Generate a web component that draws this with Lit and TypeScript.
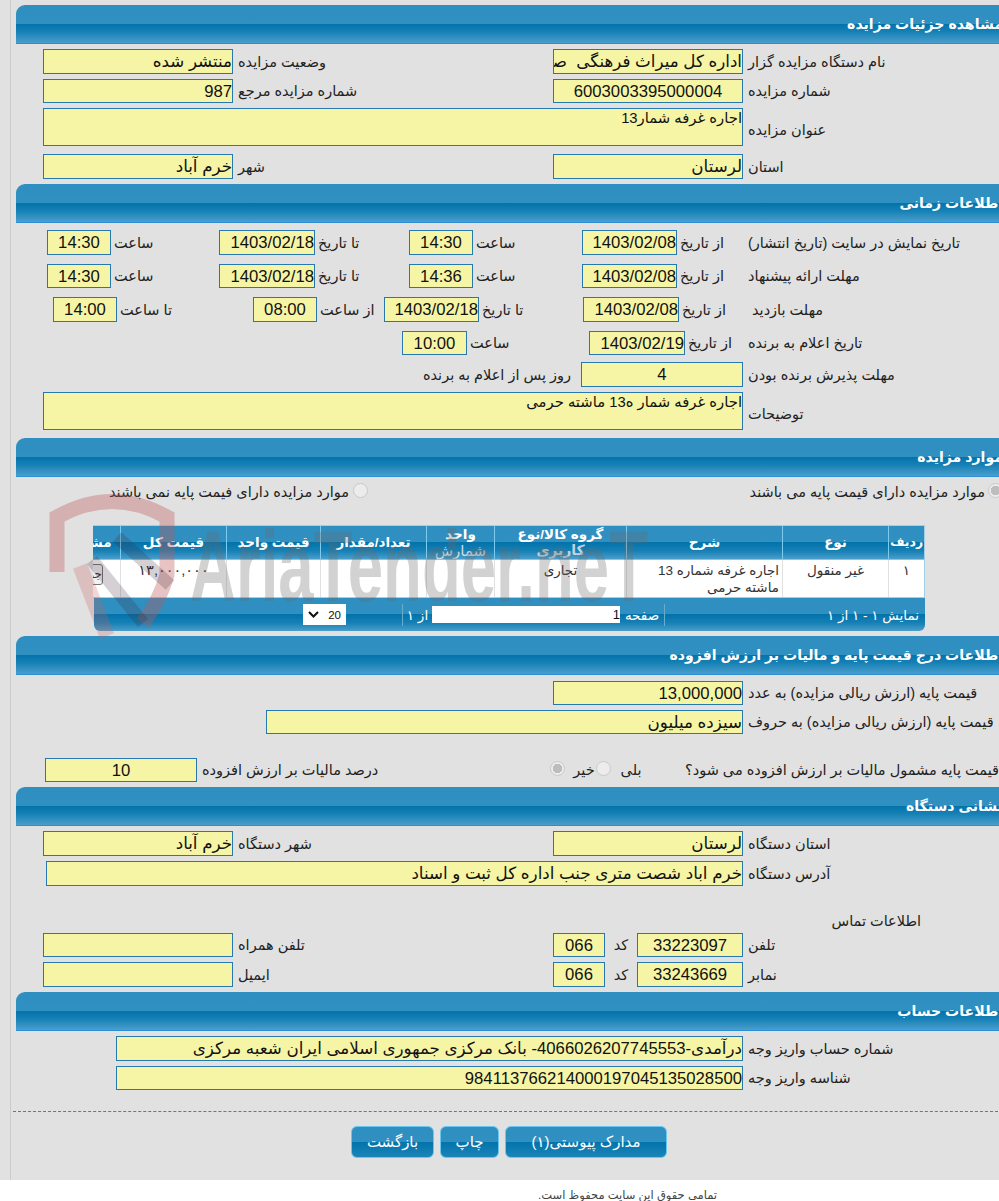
import { LitElement, html, css } from "lit";
import { customElement } from "lit/decorators.js";

const headCols = [
  html`ردیف`,
  html`نوع`,
  html`شرح`,
  html`گروه کالا/نوع <span class="dim heavy">کاربری</span>`,
  html`واحد <span class="dim">شمارش</span>`,
  html`تعداد/مقدار`,
  html`قیمت واحد`,
  html`قیمت کل`,
  html`<span class="nowrap">مشاهده</span>`,
];

@customElement("app-root")
export class AppRoot extends LitElement {
  static styles = css`
    :host { display: block; width: 999px; height: 1201px; overflow: hidden; background: #fff;
      font-family: "Liberation Sans", "DejaVu Sans", sans-serif; font-size: 14.5px; color: #222; }
    .page { height: 1180px; background: #e1e1e1; padding-left: 10px; box-sizing: border-box; }
    .main { position: relative; height: 1180px; width: 1000px; box-sizing: border-box; border-left: 1px solid #cbcbcb; padding: 5px 0 0 5px; }
    .sec { width: 987px; }
    .m5 { margin-top: 5px; }
    .m8 { margin-top: 8px; }
    .bar { box-sizing: border-box; height: 39px; direction: rtl; color: #fff; font-weight: bold; font-size: 14.1px; line-height: 38px; white-space: nowrap;
      border-top-left-radius: 9px; border-bottom: 1px solid #2a8fd6;
      background: linear-gradient(#2e8fc0 0, #3090c0 49%, #0373ab 50%, #1580b5 70%, #4a9ecb 100%); }
    .body { direction: rtl; padding-right: 4px; display: flex; flex-direction: column; }

    .row { display: grid; direction: rtl; align-items: stretch; height: 25px; margin-top: 5px; }
    .h24 { height: 24px; }
    .h38 { height: 38px; }
    .two { grid-template-columns: 256px 190px 320px 190px; }
    .wide { grid-template-columns: 256px 700px; }
    .addr { grid-template-columns: 256px 697px; }
    .basew { grid-template-columns: 256px 477px; }
    .bank { grid-template-columns: 256px 627px; }
    .ta { grid-template-columns: 256px 66px 95px 109px 64px 94px 96px 108px 64px; }
    .tb { grid-template-columns: 256px 64px 96px 104px 95px 67px 64px 136px 64px; }
    .tc { grid-template-columns: 256px 58px 96px 122px 65px; }
    .td { grid-template-columns: 256px 162px 1fr; }
    .phone { grid-template-columns: 256px 106px 32px 52px 320px 190px; }
    .tax { grid-template-columns: 314px 42px 24px 8px 15px 24px 22px 353px 152px; }

    .l { display: flex; align-items: center; justify-content: flex-end; padding-left: 5px; white-space: nowrap; min-width: 0; }
    .l0 { padding-left: 0; }
    .l3 { padding-left: 3px; }
    .l9 { padding-left: 9px; }
    .lr { justify-content: flex-start; padding-right: 10px; padding-left: 0; }
    .c { justify-content: center; padding: 0; }
    .low { padding-top: 5px; }
    .f { box-sizing: border-box; border: 1px solid #2778b0; background: #f6f5a5; overflow: hidden; white-space: pre; font-size: 16.7px; line-height: 23px; color: #111; text-align: right; }
    .mid { text-align: center; }
    .area { font-size: 14.8px; line-height: 18px; white-space: normal; }
    .g1 { margin-top: 1px; }
    .g6 { margin-top: 6px; }
    .g7 { margin-top: 7px; }
    .g8 { margin-top: 8px; }
    .g9 { margin-top: 9px; }
    .g24 { margin-top: 24px; }

    .radios { display: flex; direction: rtl; height: 24px; margin: 3px -4px 0 0; align-items: center; }
    .rt { white-space: nowrap; }
    .rt1 { width: 635px; display: flex; gap: 3px; align-items: center; flex: none; }
    .rt2 { display: flex; gap: 4px; align-items: center; flex: none; }
    .radio { width: 15px; height: 15px; box-sizing: border-box; border-radius: 50%; border: 1px solid #c9c9c9; background: #ececec; display: block; flex: none; position: relative; top: -2px; }
    .on { background: radial-gradient(circle, #bdbdbd 0 4.5px, #ececec 5px); }
    .taxr { display: flex; align-items: center; justify-content: flex-end; }

    .tablewrap { width: 832px; margin: 21px 74px 0 0; border: 1px solid #a0cfe6; border-left: 0; box-sizing: border-box; overflow: hidden; background: #fff; height: 73px; }
    .tgrid { display: grid; grid-template-columns: 36px 106px 156px 132px 68px 106px 94px 106px 70px; direction: rtl; width: 874px; }
    .th { box-sizing: border-box; height: 34px; border-left: 1px solid #7ccbef; border-bottom: 1px solid #7ccbef; color: #fff; font-weight: bold; font-size: 13.5px; line-height: 15.5px; display: flex; flex-direction: column; align-items: center; justify-content: center; text-align: center; overflow: hidden;
      background: linear-gradient(#2e8fc0 0, #3090c0 49%, #0373ab 50%, #1580b5 75%, #4a9ecb 100%); }
    .th:first-child { font-size: 12.5px; }
    .th .dim { display: block; color: #d0dde5; font-weight: normal; font-size: 15px; }
    .th .heavy { font-weight: bold; font-size: 14px; color: #c3d3dc; }
    .nowrap { white-space: nowrap; }
    .td1 { box-sizing: border-box; height: 37px; border-left: 1px solid #e0e0e0; background: #fff; font-size: 13.5px; line-height: 17px; text-align: center; padding: 2px 3px; color: #333; overflow: hidden; }
    .tr { text-align: right; padding-right: 3px; }
    .big { font-size: 14.5px; }
    .mini { direction: rtl; display: block; width: 60px; height: 21px; box-sizing: border-box; margin: 4px 17px 0 0; border: 1px solid #777; border-radius: 3px; background: #f2f2f2; font-size: 12px; line-height: 19px; text-align: right; white-space: nowrap; overflow: hidden; flex: none; }
    .mini-wrap { display: flex; justify-content: flex-start; padding: 0; }
    .pager { width: 831px; margin: 0 74px 0 0; height: 33px; box-sizing: border-box; border-radius: 0 0 6px 6px; direction: rtl; display: flex; align-items: center; color: #fff; font-size: 13.5px;
      background: linear-gradient(#2e8fc0 0, #3090c0 49%, #0373ab 50%, #1580b5 75%, #4a9ecb 100%); }
    .info { width: 203px; padding-right: 6px; box-sizing: border-box; white-space: nowrap; flex: none; }
    .ico { display: flex; justify-content: center; opacity: .45; flex: none; }
    .i30 { width: 30px; }
    .i22 { width: 22px; }
    .i28 { width: 28px; }
    .sep { width: 1px; height: 22px; background: #6aaccf; flex: none; }
    .s1 { margin: 0 5px 0 0; }
    .s2 { margin: 0 0 0 2px; }
    .word { white-space: nowrap; flex: none; text-align: center; }
    .w44 { width: 44px; }
    .w29 { width: 29px; }
    .pinput { width: 188px; height: 17px; background: #fff; color: #111; flex: none; font-size: 13px; line-height: 17px; text-align: right; }
    .sel { width: 43px; height: 21px; background: #fff; color: #111; flex: none; display: flex; align-items: center; justify-content: space-between; padding: 0 5px; box-sizing: border-box; font-size: 11.5px; margin-right: 4px; }

    .note { height: 23px; margin-top: 23px; padding-right: 78px; display: flex; align-items: center; }
    .dash { border-top: 1px dashed #3d86ad; margin: 21px 0 0 -3px; width: 990px; }
    .btns { display: flex; direction: rtl; gap: 6px; margin-top: 14px; padding-right: 336px; }
    .btn { box-sizing: border-box; height: 32px; border: 1px solid #69c6ee; border-radius: 6px; color: #fff; font-size: 15px; display: flex; align-items: center; justify-content: center;
      background: linear-gradient(#2e8fc0 0, #3090c0 49%, #0373ab 50%, #1a85b8 100%); }
    .b1 { width: 162px; } .b2 { width: 59px; } .b3 { width: 83px; }
    .foot { direction: rtl; height: 21px; padding-right: 282px; padding-top: 8px; box-sizing: border-box; font-size: 11.5px; letter-spacing: .3px; color: #444; white-space: nowrap; }

    .mark { position: absolute; left: -11px; top: 490px; width: 999px; height: 160px; pointer-events: none; }
    .mark-text { font-family: "Liberation Sans", sans-serif; font-weight: bold; font-size: 100px; fill: rgba(105,105,105,.3); }
    .rim { fill: none; stroke: rgba(190,90,90,.36); stroke-width: 15; }
    .chk { fill: none; stroke: rgba(205,90,90,.25); stroke-width: 15; }
    .chk2 { fill: none; stroke: rgba(60,40,60,.22); stroke-width: 13; }
  `;

  private tri(flip: boolean) {
    return html`<svg width="16" height="8" viewBox="0 0 16 8">
      ${flip
        ? html`<path fill="#fff" d="M8 0 1 4l7 4zM15 0 8 4l7 4z" />`
        : html`<path fill="#fff" d="M1 0l7 4-7 4zM8 0l7 4-7 4z" />`}
    </svg>`;
  }
  private edge(flip: boolean) {
    return html`<svg width="12" height="8" viewBox="0 0 12 8">
      ${flip
        ? html`<path fill="#fff" d="M0 0h2v8H0zM10 0 3 4l7 4z" />`
        : html`<path fill="#fff" d="M10 0h2v8h-2zM2 0l7 4-7 4z" />`}
    </svg>`;
  }

  render() {
    return html`<div class="page"><div class="main">
      <div class="sec">
        <div class="bar">مشاهده جزئیات مزایده</div>
        <div class="body">
          <div class="row two">
            <div class="l">نام دستگاه مزایده گزار</div>
            <div class="f">اداره کل میراث فرهنگی  صنایع دستی و گردشگری استان لرستان</div>
            <div class="l">وضعیت مزایده</div>
            <div class="f">منتشر شده</div>
          </div>
          <div class="row two h24">
            <div class="l">شماره مزایده</div><div class="f mid">6003003395000004</div>
            <div class="l">شماره مزایده مرجع</div><div class="f">987</div>
          </div>
          <div class="row wide h38">
            <div class="l low">عنوان مزایده</div><div class="f area">اجاره غرفه شمار13</div>
          </div>
          <div class="row two g8">
            <div class="l">استان</div><div class="f">لرستان</div>
            <div class="l">شهر</div><div class="f">خرم آباد</div>
          </div>
        </div>
      </div>

      <div class="sec m5">
        <div class="bar">اطلاعات زمانی</div>
        <div class="body">
          <div class="row ta g7">
            <div class="l">تاریخ نمایش در سایت (تاریخ انتشار)</div><div class="l l3">از تاریخ</div><div class="f">1403/02/08</div>
            <div class="l l3">ساعت</div><div class="f mid">14:30</div>
            <div class="l l3">تا تاریخ</div><div class="f">1403/02/18</div>
            <div class="l l3">ساعت</div><div class="f mid">14:30</div>
          </div>
          <div class="row ta h24 g9">
            <div class="l">مهلت ارائه پیشنهاد</div><div class="l l3">از تاریخ</div><div class="f">1403/02/08</div>
            <div class="l l3">ساعت</div><div class="f mid">14:36</div>
            <div class="l l3">تا تاریخ</div><div class="f">1403/02/18</div>
            <div class="l l3">ساعت</div><div class="f mid">14:30</div>
          </div>
          <div class="row tb g9">
            <div class="l l9">مهلت بازدید</div><div class="l l3">از تاریخ</div><div class="f">1403/02/08</div>
            <div class="l l3">تا تاریخ</div><div class="f">1403/02/18</div>
            <div class="l l3">از ساعت</div><div class="f mid">08:00</div>
            <div class="l l3">تا ساعت</div><div class="f mid">14:00</div>
          </div>
          <div class="row tc h24 g9">
            <div class="l">تاریخ اعلام به برنده</div><div class="l l3">از تاریخ</div><div class="f">1403/02/19</div>
            <div class="l l3">ساعت</div><div class="f mid">10:00</div>
          </div>
          <div class="row td g7">
            <div class="l">مهلت پذیرش برنده بودن</div><div class="f mid">4</div><div class="l lr">روز پس از اعلام به برنده</div>
          </div>
          <div class="row wide h38">
            <div class="l low">توضیحات</div><div class="f area">اجاره غرفه شمار ه13 ماشته حرمی</div>
          </div>
        </div>
      </div>

      <div class="sec m8">
        <div class="bar">موارد مزایده</div>
        <div class="body">
          <div class="radios">
            <div class="rt1"><span class="radio on"></span><span class="rt">موارد مزایده دارای قیمت پایه می باشند</span></div>
            <div class="rt2"><span class="radio"></span><span class="rt">موارد مزایده دارای فیمت پایه نمی باشند</span></div>
          </div>
          <div class="tablewrap">
            <div class="tgrid">
              ${headCols.map((c) => html`<div class="th">${c}</div>`)}
              <div class="td1">۱</div>
              <div class="td1">غیر منقول</div>
              <div class="td1 tr">اجاره غرفه شماره 13 ماشته حرمی</div>
              <div class="td1">تجاری</div>
              <div class="td1"></div>
              <div class="td1"></div>
              <div class="td1"></div>
              <div class="td1 big">۱۳,۰۰۰,۰۰۰</div>
              <div class="td1 mini-wrap"><span class="mini">جزئیات</span></div>
            </div>
          </div>
          <div class="pager">
            <div class="info">نمایش ۱ - ۱ از ۱</div>
            <div class="ico i30">${this.edge(false)}</div>
            <div class="ico i22">${this.tri(false)}</div>
            <div class="sep s1"></div>
            <div class="word w44">صفحه</div>
            <div class="pinput">1</div>
            <div class="word w29">از ۱</div>
            <div class="sep s2"></div>
            <div class="ico i28">${this.tri(true)}</div>
            <div class="ico i22">${this.edge(true)}</div>
            <div class="sel"><span>20</span>
              <svg width="11" height="7" viewBox="0 0 11 7"><path d="M1 1l4.5 4.5L10 1" fill="none" stroke="#111" stroke-width="2"/></svg>
            </div>
          </div>
        </div>
      </div>

      <div class="sec m5">
        <div class="bar">اطلاعات درج قیمت پایه و مالیات بر ارزش افزوده</div>
        <div class="body">
          <div class="row two h24 g6">
            <div class="l">قیمت پایه (ارزش ریالی مزایده) به عدد</div><div class="f">13,000,000</div>
          </div>
          <div class="row basew h24">
            <div class="l">قیمت پایه (ارزش ریالی مزایده) به حروف</div><div class="f">سیزده میلیون</div>
          </div>
          <div class="row tax h24 g24">
            <div class="l l0">قیمت پایه مشمول مالیات بر ارزش افزوده می شود؟</div>
            <div></div>
            <div class="l c">بلی</div>
            <div></div>
            <div class="taxr"><span class="radio"></span></div>
            <div class="l c">خیر</div>
            <div class="taxr"><span class="radio on"></span></div>
            <div class="l">درصد مالیات بر ارزش افزوده</div>
            <div class="f mid">10</div>
          </div>
        </div>
      </div>

      <div class="sec m5">
        <div class="bar">نشانی دستگاه</div>
        <div class="body">
          <div class="row two">
            <div class="l">استان دستگاه</div><div class="f">لرستان</div>
            <div class="l">شهر دستگاه</div><div class="f">خرم آباد</div>
          </div>
          <div class="row addr">
            <div class="l">آدرس دستگاه</div><div class="f">خرم اباد شصت متری جنب اداره کل ثبت و اسناد</div>
          </div>
          <div class="note">اطلاعات تماس</div>
          <div class="row phone h24 g1">
            <div class="l">تلفن</div><div class="f mid">33223097</div><div class="l c">کد</div><div class="f mid">066</div>
            <div class="l">تلفن همراه</div><div class="f"></div>
          </div>
          <div class="row phone">
            <div class="l">نمابر</div><div class="f mid">33243669</div><div class="l c">کد</div><div class="f mid">066</div>
            <div class="l">ایمیل</div><div class="f"></div>
          </div>
        </div>
      </div>

      <div class="sec m5">
        <div class="bar">اطلاعات حساب</div>
        <div class="body">
          <div class="row bank">
            <div class="l">شماره حساب واریز وجه</div><div class="f">درآمدی-4066026207745553- بانک مرکزی جمهوری اسلامی ایران شعبه مرکزی</div>
          </div>
          <div class="row bank h24">
            <div class="l">شناسه واریز وجه</div><div class="f">984113766214000197045135028500</div>
          </div>
        </div>
        <div class="dash"></div>
        <div class="btns">
          <div class="btn b1">مدارک پیوستی(۱)</div>
          <div class="btn b2">چاپ</div>
          <div class="btn b3">بازگشت</div>
        </div>
      </div>

      <svg class="mark" viewBox="0 0 999 160">
        <text class="mark-text" x="190" y="111" textLength="458" lengthAdjust="spacingAndGlyphs">AriaTender.neT</text>
        <path class="rim" d="M57 82V27Q112 -4 167 27V85Q160 110 143 133" />
        <path class="chk" d="M80 76 107 146" />
        <path class="chk2" d="M117 47 170 95M143 133 92 70" />
      </svg>
    </div></div>
    <div class="foot">تمامی حقوق این سایت محفوظ است.</div>`;
  }
}
